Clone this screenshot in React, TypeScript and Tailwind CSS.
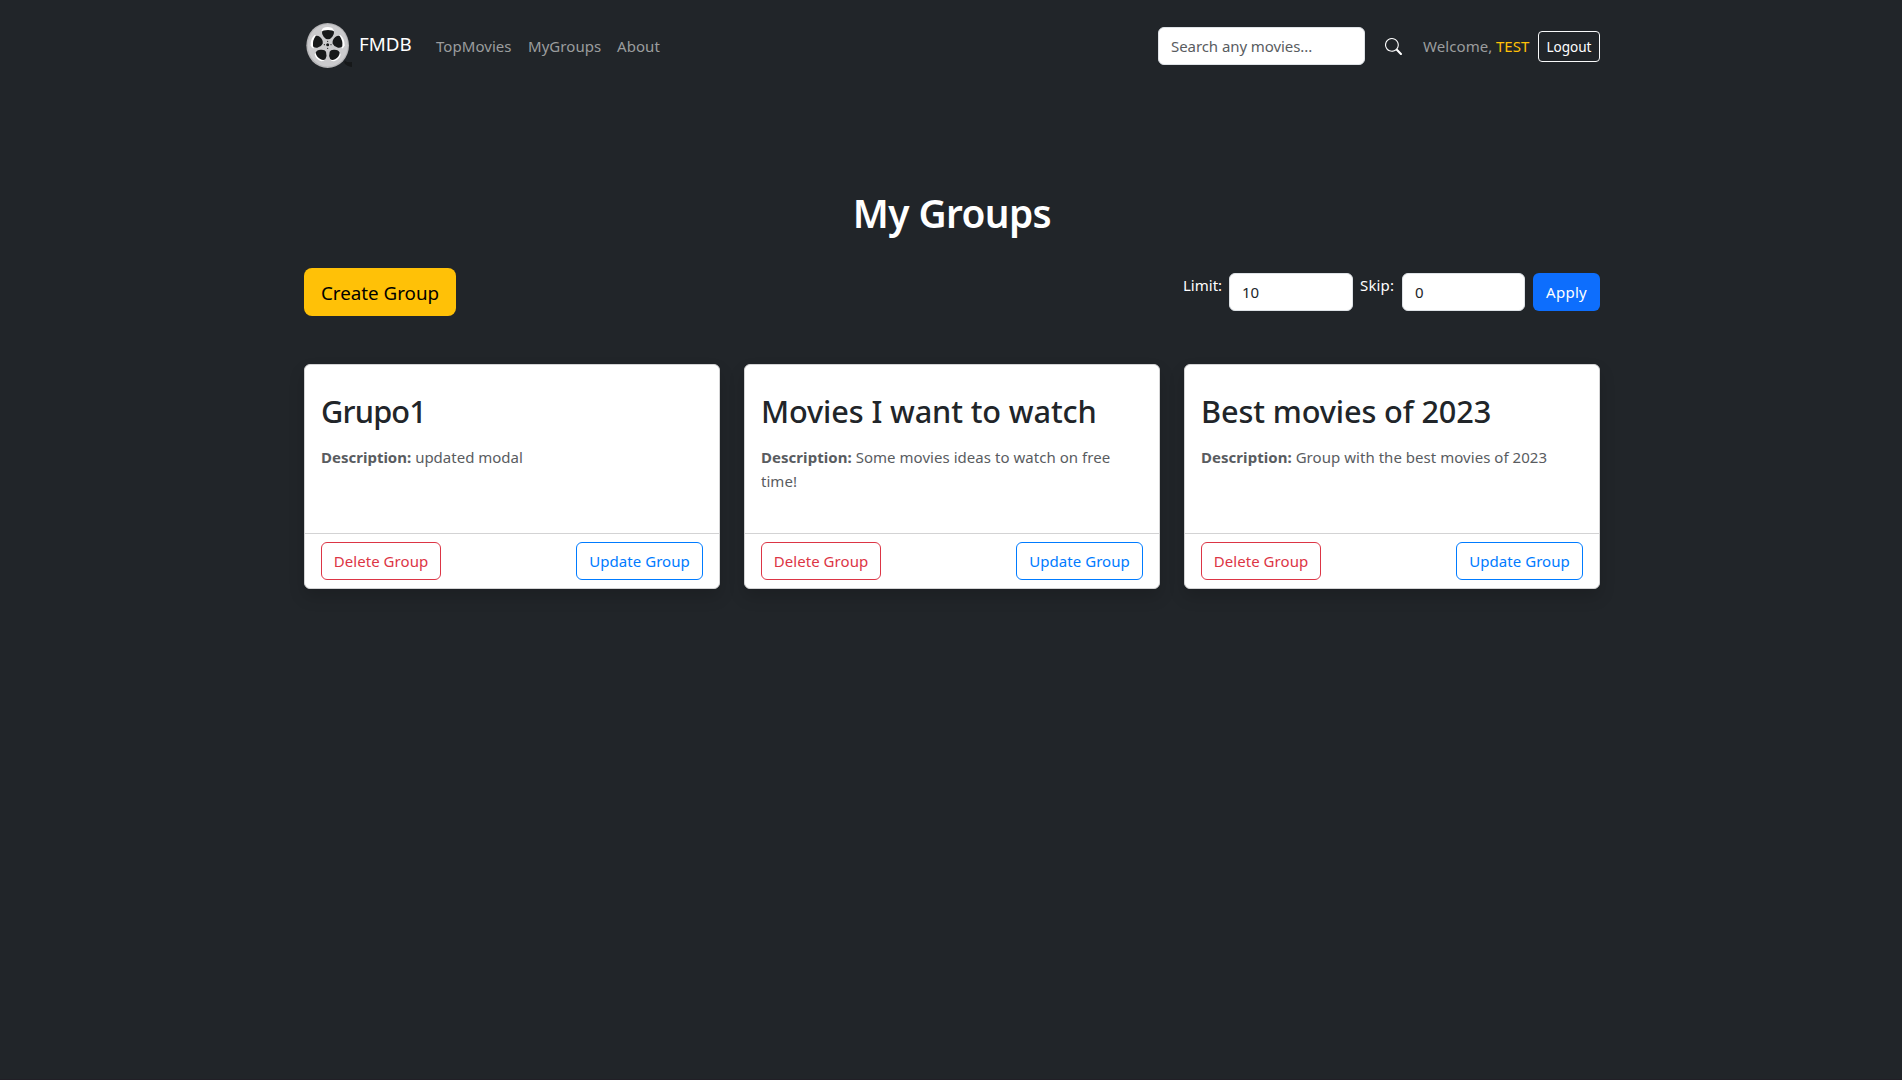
const groups = [
  { title: "Grupo1", spacing: "tracking-[-0.8px]", description: "updated modal", textSpacing: "tracking-[0px]" },
  {
    title: "Movies I want to watch",
    spacing: "tracking-[-0.12px]",
    description: "Some movies ideas to watch on free time!",
    textSpacing: "tracking-[0.04px]",
  },
  {
    title: "Best movies of 2023",
    spacing: "tracking-[-0.12px]",
    description: "Group with the best movies of 2023",
    textSpacing: "tracking-[0.04px]",
  },
];

function ReelLogo() {
  return (
    <svg className="h-12 w-12 shrink-0" viewBox="12 21 144 144" aria-hidden="true">
      <path d="M134 137 Q143 143 156 141 L156 156 Q140 155 133 144 Z" fill="#161819" />
      <ellipse cx="83" cy="91.5" rx="64" ry="67.5" fill="#b5b5b7" />
      <ellipse cx="83.5" cy="91" rx="60" ry="63.5" fill="#cbcbcd" />
      <g fill="#ffffff">
        <path d="M65 46 Q68 36 83 36 Q98 36 101 46 L98 52 L67 52 Z" />
        <path d="M44 60 Q31 70 32 91 Q34 99 40 101 L48 62 Z" />
        <path d="M121 60 Q134 70 134 91 Q132 99 126 101 L117 62 Z" />
        <path d="M44 117 Q45 133 64 139 Q73 139 76 133 L50 112 Z" />
        <path d="M122 117 Q121 133 102 139 Q93 139 90 133 L116 112 Z" />
      </g>
      <g fill="#17191a">
        <path d="M66 50 Q68 45 84 45 Q100 45 102 50 Q103 58 97 65 Q91 73 84 73 Q77 73 71 65 Q65 58 66 50 Z" />
        <path d="M47 63 Q53 61 60 66 Q70 74 68 86 Q64 95 52 98 Q41 99 39 94 Q37 76 47 63 Z" />
        <path d="M119 63 Q113 61 106 66 Q96 74 98 86 Q102 95 114 98 Q125 99 127 94 Q129 76 119 63 Z" />
        <path d="M47 113 Q50 104 62 104 Q75 103 78 110 Q82 122 76 133 Q70 137 62 133 Q49 125 47 113 Z" />
        <path d="M119 113 Q116 104 104 104 Q92 103 89 110 Q85 122 91 133 Q97 137 105 133 Q118 125 119 113 Z" />
        <circle cx="83" cy="89" r="4.5" />
        <circle cx="83" cy="79" r="1.8" />
        <circle cx="73" cy="89" r="1.8" />
        <circle cx="93" cy="89" r="1.8" />
        <circle cx="83" cy="100" r="1.8" />
      </g>
    </svg>
  );
}

function SearchIcon() {
  return (
    <svg className="h-[17px] w-[17px]" viewBox="0 0 16 16" fill="#ffffff" aria-hidden="true">
      <path d="M11.742 10.344a6.5 6.5 0 1 0-1.397 1.398h-.001q.044.06.098.115l3.85 3.85a1 1 0 0 0 1.415-1.414l-3.85-3.85a1 1 0 0 0-.115-.1zM12 6.5a5.5 5.5 0 1 1-11 0 5.5 5.5 0 0 1 11 0" />
    </svg>
  );
}

function Navbar() {
  return (
    <nav className="flex h-[92px] items-center text-[#9b9d9e]">
      <a className="flex items-center text-white">
        <ReelLogo />
        <span className="ml-[7px] w-[57px] -translate-y-[2px] text-[18.8px] leading-[30px]">FMDB</span>
      </a>
      <div className="ml-5 flex">
        <a className="w-[92px] tracking-[0.05px]">TopMovies</a>
        <a className="w-[89px] tracking-[0.05px]">MyGroups</a>
        <a className="tracking-[0.07px]">About</a>
      </div>
      <div className="ml-auto flex items-center">
        <input
          className="h-[38px] w-[207px] rounded-md border border-[#dee2e6] bg-white px-3 text-[#212529] tracking-[-0.07px] placeholder:text-[#595c5f]"
          placeholder="Search any movies..."
        />
        <button className="ml-5 flex h-[38px] items-center" aria-label="Search">
          <SearchIcon />
        </button>
        <span className="ml-[21px] w-[73px] tracking-[0.09px]">Welcome,</span>
        <span className="w-[42px] text-[#ffc107]">TEST</span>
        <button className="h-[31px] w-[62px] rounded border border-[#f8f9fa] text-[13.6px] leading-[21px] text-white tracking-[-0.06px]">
          Logout
        </button>
      </div>
    </nav>
  );
}

function Toolbar() {
  return (
    <div className="mt-[31px] flex h-12 items-center justify-between">
      <button className="flex h-12 w-[152px] justify-center rounded-lg bg-[#ffc107] pt-[10px] text-[18.8px] leading-[30px] text-black">
        Create Group
      </button>
      <form className="flex h-[38px] items-start">
        <label className="w-[46px] text-white">Limit:</label>
        <input
          className="h-[38px] w-[124px] rounded-md border border-[#dee2e6] bg-white px-3 text-[#212529]"
          defaultValue="10"
        />
        <label className="ml-[7px] w-[42px] text-white tracking-[0.15px]">Skip:</label>
        <input
          className="h-[38px] w-[123px] rounded-md border border-[#dee2e6] bg-white px-3 text-[#212529]"
          defaultValue="0"
        />
        <button
          type="button"
          className="ml-2 h-[38px] w-[67px] rounded-md bg-[#0d6efd] text-white tracking-[0.26px]"
        >
          Apply
        </button>
      </form>
    </div>
  );
}

function GroupCard({ group }: { group: (typeof groups)[number] }) {
  return (
    <article className="flex h-[225px] flex-col rounded-md border border-[#d3d3d4] bg-white shadow-[0_8px_16px_rgba(0,0,0,0.15)]">
      <div className="flex-1 px-4 pt-[26px]">
        <h2 className={`text-[30.7px] leading-10 font-medium text-[#212529] ${group.spacing}`}>{group.title}</h2>
        <p className={`mt-[14px] text-[#595c5f] ${group.textSpacing}`}>
          <strong className="font-bold">Description:</strong> {group.description}
        </p>
      </div>
      <footer className="flex justify-between border-t border-[#d3d3d4] px-4 py-2">
        <button className="h-[38px] w-[120px] rounded-md border border-[#dc3545] text-[#dc3545] tracking-[0.06px]">
          Delete Group
        </button>
        <button className="h-[38px] w-[127px] rounded-md border border-[#007bff] text-[#007bff] tracking-[0.05px]">
          Update Group
        </button>
      </footer>
    </article>
  );
}

export default function App() {
  return (
    <div className="min-h-screen border-b border-[#211f26] bg-[#212529] font-['Noto_Sans','Open_Sans',sans-serif] text-[15px] leading-6">
      <div className="ml-[304px] w-[1296px]">
        <Navbar />
        <main>
          <h1 className="mt-[97px] text-center text-[38.8px] leading-[48px] font-semibold text-white tracking-[-0.6px]">
            My Groups
          </h1>
          <Toolbar />
          <section className="mt-12 grid grid-cols-3 gap-6">
            {groups.map((group) => (
              <GroupCard key={group.title} group={group} />
            ))}
          </section>
        </main>
      </div>
    </div>
  );
}
